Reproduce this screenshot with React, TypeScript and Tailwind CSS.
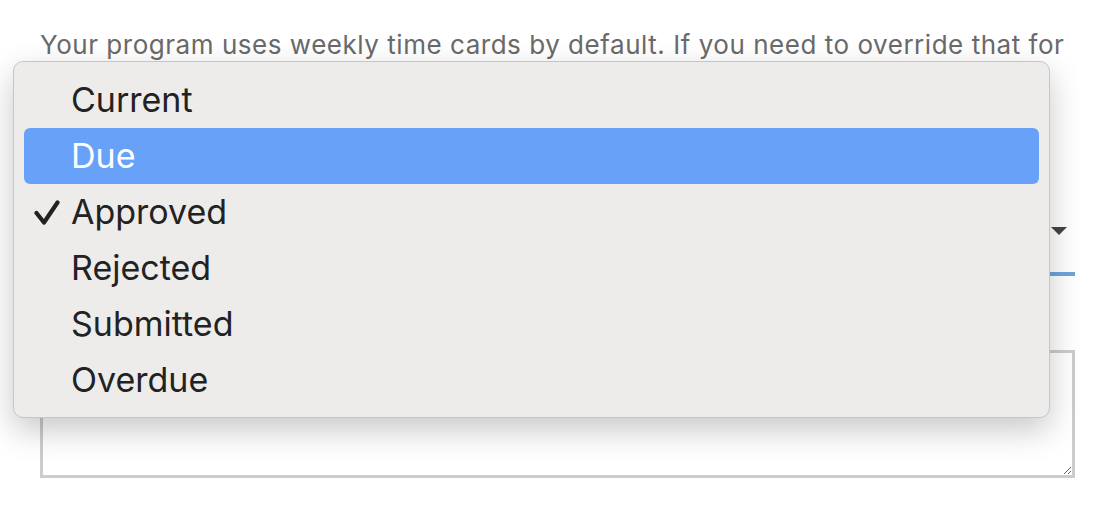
const options = ["Current", "Due", "Approved", "Rejected", "Submitted", "Overdue"];

const Check = () => (
  <svg width="26" height="26" viewBox="0 0 26 26" className="absolute left-[10px] top-[16px]">
    <polyline
      points="2.5,13 10,22.5 23.5,2.5"
      fill="none"
      stroke="#222"
      strokeWidth="4.2"
      strokeLinecap="round"
      strokeLinejoin="round"
    />
  </svg>
);

const StatusMenu = ({ active, selected }: { active: string; selected: string }) => (
  <div className="absolute left-[13px] top-[61px] w-[1037px] rounded-[10px] border border-[#c6c6c6] bg-[#edeceb] px-[10px] pt-[10px] pb-[9px] shadow-[0_12px_32px_rgba(0,0,0,0.22)]">
    {options.map((opt) => (
      <div
        key={opt}
        className={
          opt === active
            ? "relative flex h-[56px] items-center rounded-[6px] bg-[#68a2f8] pl-[47px] text-white"
            : "relative flex h-[56px] items-center pl-[47px] text-[#222]"
        }
      >
        {opt === selected && <Check />}
        <span className="text-[34px] leading-none">{opt}</span>
      </div>
    ))}
  </div>
);

export default function App() {
  return (
    <div className="relative h-[518px] w-[1118px] bg-white font-['Inter','Liberation_Sans',sans-serif]">
      <div className="ml-[40px] flex w-[1035px] flex-col pt-[29px]">
        <p className="whitespace-nowrap text-[26px] leading-[32px] tracking-[0.53px] text-[#6a6a6a]">
          Your program uses weekly time cards by default. If you need to override that for
        </p>
        <div className="mt-[129px] flex h-[86px] items-center justify-end border-b-[4px] border-[#6fa4dc] pr-[8px]">
          <svg width="16" height="8" viewBox="0 0 16 8">
            <polygon points="0,0 16,0 8,8" fill="#444" />
          </svg>
        </div>
        <textarea
          className="mt-[74px] h-[128px] w-full resize border-[3px] border-[#cccccc] bg-white outline-none"
          defaultValue=""
        />
      </div>
      <StatusMenu active="Due" selected="Approved" />
    </div>
  );
}
